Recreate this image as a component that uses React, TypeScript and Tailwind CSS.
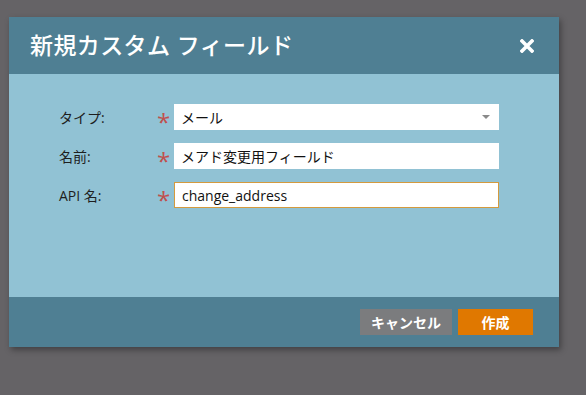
import React from "react";

const rows = [
  { label: "タイプ:", value: "メール", select: true },
  { label: "名前:", value: "メアド変更用フィールド" },
  { label: "API 名:", value: "change_address", focused: true },
];

export default function App() {
  return (
    <div
      className="w-[586px] h-[395px] bg-[#656366] pt-[17px] pl-[9px] overflow-hidden"
      style={{ fontFamily: '"Open Sans", "Noto Sans CJK JP", sans-serif' }}
    >
      <div className="w-[550px] h-[330px] flex flex-col shadow-[2px_3px_6px_rgba(0,0,0,0.35)]">
        {/* header */}
        <div className="h-[57px] bg-[#4f7f93] flex items-center justify-between pl-[21px] pr-[25px]">
          <h1 className="text-white text-[23px] leading-none font-medium tracking-[0.4px]">
            新規カスタム フィールド
          </h1>
          <svg width="14" height="14" viewBox="0 0 14 14" className="mt-[1px]">
            <path d="M2 2 L12 12 M12 2 L2 12" stroke="#fff" strokeWidth="3.6" strokeLinecap="square" />
          </svg>
        </div>

        {/* body */}
        <div className="flex-1 bg-[#91c2d4] pt-[30px] pl-[50px] pr-[60px] flex flex-col gap-[13px]">
          {rows.map((r) => (
            <div key={r.label} className="flex items-center h-[26px]">
              <div className="w-[98px] text-[14px] text-[#1e1e1e]">{r.label}</div>
              <div className="w-[17px] text-[#c0504d] text-[24px] leading-none pt-[10px]">*</div>
              <div
                className={
                  "flex-1 h-[26px] bg-white flex items-center px-[7px] text-[14px] text-[#111] " +
                  (r.focused ? "border border-[#d49a3e] px-[6px]" : "")
                }
              >
                <span className="flex-1">{r.value}</span>
                {r.select && (
                  <svg width="8" height="4" viewBox="0 0 8 4" className="mr-[2px]">
                    <path d="M0 0 H8 L4 4 Z" fill="#8a8a8a" />
                  </svg>
                )}
              </div>
            </div>
          ))}
        </div>

        {/* footer */}
        <div className="h-[50px] bg-[#4f7f93] flex items-start justify-end pt-[12px] pr-[26px] gap-[6px]">
          <button className="w-[92px] h-[26px] bg-[#7b7c7e] text-white text-[14px] font-bold">
            キャンセル
          </button>
          <button className="w-[75px] h-[26px] bg-[#e07800] text-white text-[14px] font-bold">
            作成
          </button>
        </div>
      </div>
    </div>
  );
}
